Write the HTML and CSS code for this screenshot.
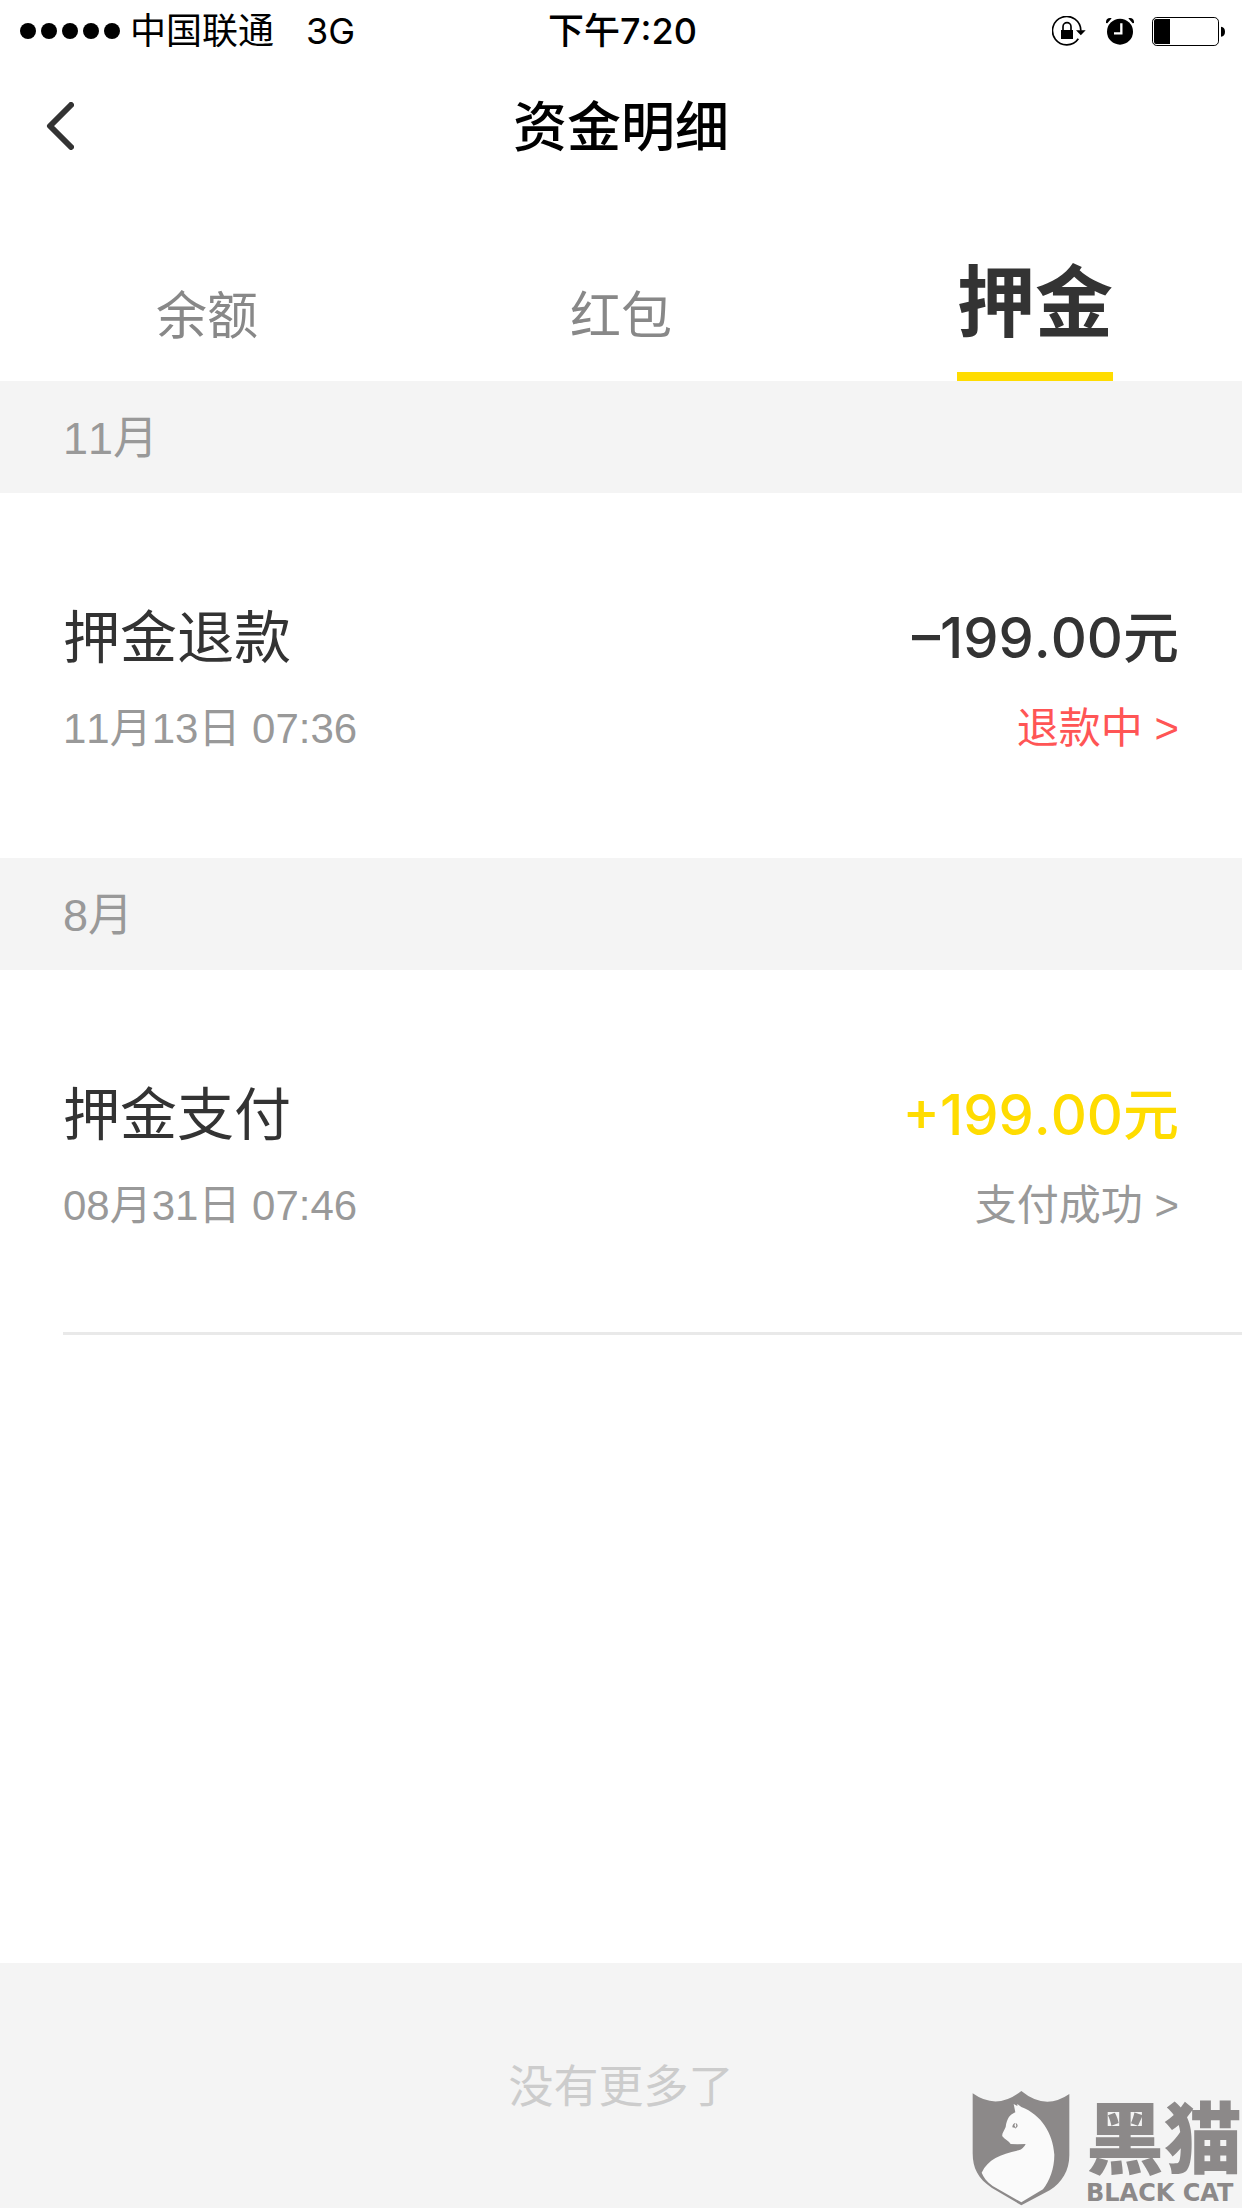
FILE: index.html
```html
<!DOCTYPE html>
<html lang="zh-CN">
<head>
  <meta charset="utf-8">
  <meta name="viewport" content="width=device-width, initial-scale=1">
  <title>资金明细</title>
  <link rel="stylesheet" href="styles.css">
</head>
<body class="page">
  <div class="status">
    <div class="status-left">
      <span class="signal"><i class="dot"></i><i class="dot"></i><i class="dot"></i><i class="dot"></i><i class="dot"></i></span>
      <span class="carrier">中国联通</span>
      <span>3G</span>
    </div>
    <div class="status-time">下午7:20</div>
    <div class="status-right">
      <svg class="icon-lock" viewBox="0 0 102 90" aria-hidden="true">
        <path d="M79 68A42.500 42.500 0 1 1 86.500 44" fill="none" stroke="#000" stroke-width="5"/>
        <path d="M72 43h29L86.500 58z"/>
        <path d="M27 42h36v27H27z"/>
        <path d="M33 43V32a12 12 0 0 1 24 0v11" fill="none" stroke="#000" stroke-width="5"/>
      </svg>
      <svg class="icon-alarm" viewBox="0 0 84 84" aria-hidden="true">
        <circle cx="42" cy="44" r="39"/>
        <path d="M0 18C-1 7 6 1 17 4L4 19zM84 18C85 7 78 1 67 4L80 19z"/>
        <path d="M46 19v30H24" fill="none" stroke="#fff" stroke-width="7"/>
      </svg>
      <svg class="icon-battery" viewBox="0 0 219 87" aria-hidden="true">
        <rect x="1.500" y="1.500" width="198" height="84" rx="13" fill="none" stroke="#000" stroke-width="3"/>
        <path d="M12 6h42v75H12q-6 0-6-6V12q0-6 6-6zM207 29q12 2 12 15t-12 15z"/>
      </svg>
    </div>
  </div>

  <header class="nav">
    <button class="back" type="button" aria-label="返回">
      <svg class="icon-back" viewBox="0 0 28 48" aria-hidden="true">
        <path d="M25 3L4 24l21 21" fill="none" stroke="#333" stroke-width="6" stroke-linecap="round" stroke-linejoin="round"/>
      </svg>
    </button>
    <h1 class="title">资金明细</h1>
  </header>

  <nav class="tabs">
    <a class="tab" href="#balance">余额</a>
    <a class="tab" href="#bonus">红包</a>
    <a class="tab tab-active" href="#deposit" aria-current="page">押金</a>
  </nav>

  <main>
    <section>
      <h2 class="month">11月</h2>
      <div class="row">
        <div class="cell">
          <span class="name">押金退款</span>
          <time class="detail">11月13日 07:36</time>
        </div>
        <div class="cell cell-end">
          <span class="amount">–199.00元</span>
          <a class="detail detail-pending" href="#refund">退款中 &gt;</a>
        </div>
      </div>
    </section>
    <section>
      <h2 class="month">8月</h2>
      <div class="row row-last">
        <div class="cell">
          <span class="name">押金支付</span>
          <time class="detail">08月31日 07:46</time>
        </div>
        <div class="cell cell-end">
          <span class="amount amount-in">+199.00元</span>
          <a class="detail" href="#payment">支付成功 &gt;</a>
        </div>
      </div>
    </section>
  </main>

  <footer class="end">没有更多了</footer>

  <div class="brand">
    <svg class="brand-mark" viewBox="98 96 294 348" aria-hidden="true">
      <path fill="#8c8989" d="M100 106Q173 158 246 99Q318 158 390 108V292C390 338 368 374 331 397L246 442L158 390C116 362 100 330 100 286z"/>
      <path fill="#fafafa" d="M223 138L234 144L234 138L246 147C306 170 341 226 345 290C345 332 331 368 311 394L246 433L160 384C142 371 132 357 127 344C146 304 184 288 238 277Q252 273 259 258Q232 259 214 258C209 250 197 245 189 235C187 226 194 220 199 207C203 180 212 170 228 163z"/>
      <path fill="#8c8989" d="M219 208Q219 197 228 195L225 202L229 210zM229 195Q237 199 234 206L227 213L231 203z"/>
    </svg>
    <div class="brand-text">
      <span class="brand-name">黑猫</span>
      <span class="brand-latin">BLACK CAT</span>
    </div>
  </div>
</body>
</html>
```
FILE: styles.css
```css
* {
  box-sizing: border-box;
}

.page {
  margin: 0;
  min-height: 100vh;
  display: flex;
  flex-direction: column;
  position: relative;
  background: #fff;
  color: #333;
  font-family: "Liberation Sans", "Noto Sans CJK SC", sans-serif;
  font-kerning: none;
}

.page a {
  text-decoration: none;
}

/* Status bar */
.status {
  height: 60px;
  padding: 2px 17px 0 20px;
  display: grid;
  grid-template-columns: 1fr auto 1fr;
  align-items: center;
  color: #000;
  font-family: Inter, "Noto Sans CJK SC", sans-serif;
  font-size: 36px;
  line-height: 58px;
}

.status-left,
.status-right,
.signal {
  display: flex;
  align-items: center;
}

.signal {
  gap: 5px;
  margin-right: 10px;
}

.dot {
  width: 16px;
  height: 16px;
  border-radius: 50%;
  background: #000;
}

.carrier {
  margin-right: 32px;
}

.status-time {
  font-weight: 500;
}

.status-right {
  justify-content: flex-end;
}

.icon-lock {
  width: 34px;
  height: 30px;
  margin-right: 20px;
}

.icon-alarm {
  width: 28px;
  height: 28px;
  margin-right: 18px;
}

.icon-battery {
  width: 73px;
  height: 29px;
}

/* Title bar */
.nav {
  height: 132px;
  padding: 0 46px;
  display: grid;
  grid-template-columns: 1fr auto 1fr;
  align-items: center;
}

.back {
  justify-self: start;
  display: flex;
  padding: 0;
  border: 0;
  background: none;
}

.icon-back {
  width: 28px;
  height: 48px;
}

.title {
  margin: 0;
  padding-top: 4px;
  color: #000;
  font-size: 54px;
  font-weight: 500;
  line-height: 80px;
}

/* Tabs */
.tabs {
  height: 189px;
  display: grid;
  grid-template-columns: repeat(3, 1fr);
  justify-items: center;
  align-items: end;
}

.tab {
  padding-bottom: 24px;
  color: #888;
  font-size: 51px;
  line-height: 80px;
}

.tab-active {
  padding-bottom: 10px;
  border-bottom: 9px solid #ffdc00;
  color: #333;
  font-size: 78px;
  font-weight: 700;
  line-height: 116px;
}

/* Records */
.month {
  margin: 0;
  padding: 4px 63px 0;
  background: #f4f4f4;
  color: #999;
  font-size: 45px;
  font-weight: 400;
  line-height: 108px;
}

.row {
  margin-left: 63px;
  padding: 105px 63px 96px 0;
  display: flex;
  justify-content: space-between;
  border-bottom: 3px solid #fff;
}

.row-last {
  border-bottom-color: #e9e9e9;
}

.cell {
  display: flex;
  flex-direction: column;
  gap: 21px;
}

.cell-end {
  align-items: flex-end;
}

.name {
  font-size: 57px;
  line-height: 80px;
}

.amount {
  font-family: Inter, "Noto Sans CJK SC", sans-serif;
  font-size: 56px;
  font-weight: 500;
  line-height: 80px;
}

.amount-in {
  color: #ffdc00;
}

.detail {
  color: #999;
  font-size: 42px;
  line-height: 60px;
}

.detail-pending {
  color: #ff5555;
}

.end {
  margin-top: auto;
  padding-top: 4px;
  background: #f4f4f4;
  color: #ccc;
  font-size: 45px;
  line-height: 241px;
  text-align: center;
}

/* Brand stamp over the lower right corner */
.brand {
  position: absolute;
  right: 0;
  bottom: 0;
  display: flex;
  gap: 16px;
  color: #8c8989;
}

.brand-mark {
  width: 98px;
  height: 116px;
}

.brand-text {
  display: flex;
  flex-direction: column;
  justify-content: flex-end;
}

.brand-name {
  font: 900 78px/88px "Noto Sans CJK SC", sans-serif;
}

.brand-latin {
  font: bold 24px/30px "DejaVu Sans", sans-serif;
}
```
